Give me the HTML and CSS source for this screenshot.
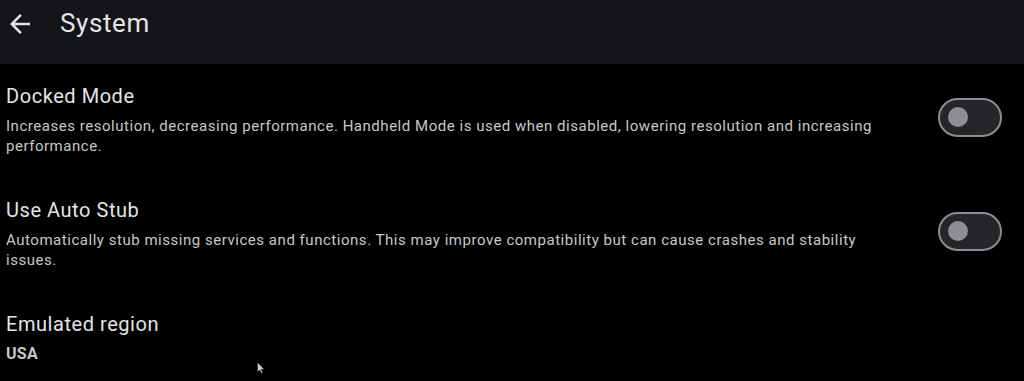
FILE: index.html
```html
<!DOCTYPE html>
<html>
<head>
<meta charset="utf-8">
<link rel="stylesheet" href="styles.css">
</head>
<body>
<header class="appbar">
  <svg class="back" viewBox="0 0 24 24" width="30" height="30"><path fill="#e4e4e6" d="M20 11H7.83l5.59-5.59L12 4l-8 8 8 8 1.41-1.41L7.83 13H20v-2z"/></svg>
  <h1 class="title">System</h1>
</header>
<main class="list">
  <div class="item">
    <div class="text">
      <div class="name">Docked Mode</div>
      <div class="desc">Increases resolution, decreasing performance. Handheld Mode is used when disabled, lowering resolution and increasing performance.</div>
    </div>
    <div class="switch"><span class="thumb"></span></div>
  </div>
  <div class="item">
    <div class="text">
      <div class="name">Use Auto Stub</div>
      <div class="desc">Automatically stub missing services and functions. This may improve compatibility but can cause crashes and stability issues.</div>
    </div>
    <div class="switch"><span class="thumb"></span></div>
  </div>
  <div class="item">
    <div class="text">
      <div class="name">Emulated region</div>
      <div class="value">USA</div>
    </div>
  </div>
</main>
<svg class="cursor" viewBox="0 0 8 12" width="8" height="12"><path d="M0.5 0.5v9.5l2.3-2.1 1.6 3.4 1.4-0.7-1.6-3.3h3.1z" fill="#cfcfcf" stroke="#222" stroke-width="0.6"/></svg>
</body>
</html>
```
FILE: styles.css
```css
html, body {
  margin: 0;
  padding: 0;
  background: #000;
  width: 1024px;
  height: 381px;
  overflow: hidden;
  font-family: Roboto, "Noto Sans", sans-serif;
  position: relative;
}
.appbar {
  height: 64px;
  background: #131518;
  display: flex;
  align-items: flex-start;
  box-sizing: border-box;
  padding: 9px 0 0 5px;
}
.back {
  display: block;
  flex: none;
}
.title {
  margin: -1px 0 0 25px;
  font-size: 26px;
  font-weight: 400;
  letter-spacing: 0.6px;
  color: #e4e4e6;
  line-height: 30px;
}
.list {
  display: flex;
  flex-direction: column;
}
.item {
  display: flex;
  align-items: center;
  padding: 18px 22px 22px 6px;
  gap: 40px;
}
.text {
  flex: 1;
  min-width: 0;
}
.name {
  font-size: 20px;
  line-height: 28px;
  letter-spacing: 0.55px;
  color: #e4e4e6;
}
.desc {
  margin-top: 6px;
  font-size: 15px;
  line-height: 20px;
  letter-spacing: 0.53px;
  color: #c6c7cb;
}
.value {
  margin-top: 6px;
  font-size: 16px;
  line-height: 20px;
  font-weight: 700;
  letter-spacing: 0.3px;
  color: #c6c7cb;
}
.switch {
  flex: none;
  width: 52px;
  height: 35px;
  border: 2.5px solid #8c8d91;
  border-radius: 20px;
  background: #25262a;
  display: flex;
  align-items: center;
  padding-left: 8px;
  box-sizing: content-box;
  margin-bottom: 4px;
}
.thumb {
  width: 20px;
  height: 20px;
  border-radius: 50%;
  background: #8e8f93;
}
.cursor {
  position: absolute;
  left: 257px;
  top: 362px;
}
```
